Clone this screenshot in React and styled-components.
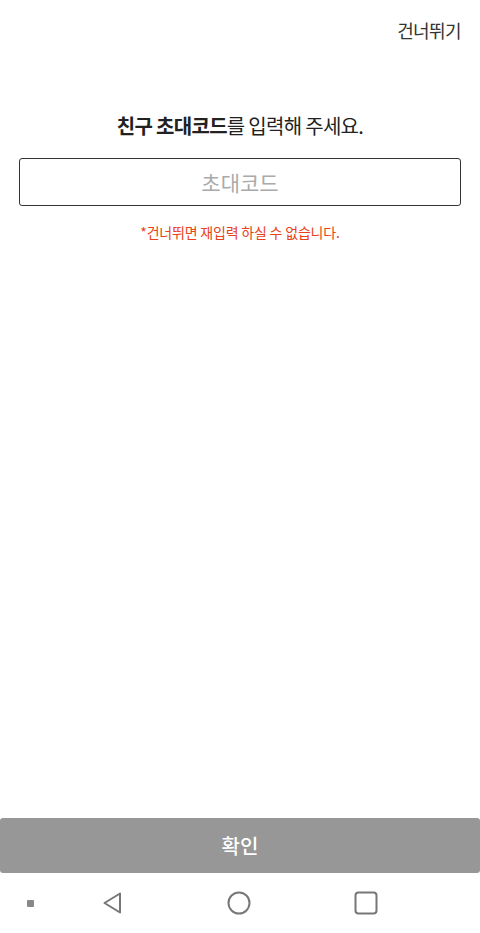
import styled, { createGlobalStyle } from "styled-components";

const GlobalStyle = createGlobalStyle`
  html, body {
    margin: 0;
    padding: 0;
    background: #fff;
  }
  body {
    font-family: "Noto Sans CJK KR", "Noto Sans", sans-serif;
  }
  * { box-sizing: border-box; }
`;

const App = () => {
  return (
    <Screen>
      <GlobalStyle />
      <Header>
        <SkipButton>건너뛰기</SkipButton>
      </Header>
      <Content>
        <Title>
          <strong>친구 초대코드</strong>를 입력해 주세요.
        </Title>
        <CodeInput placeholder="초대코드" />
        <Notice>*건너뛰면 재입력 하실 수 없습니다.</Notice>
      </Content>
      <ConfirmButton>확인</ConfirmButton>
      <NavBar>
        <NavSlot>
          <Dot />
        </NavSlot>
        <NavSlot>
          <svg width="24" height="26" viewBox="0 0 24 26">
            <path
              d="M20 3.5 L4.5 13 L20 22.5 Z"
              fill="none"
              stroke="#777"
              strokeWidth="2"
              strokeLinejoin="round"
            />
          </svg>
        </NavSlot>
        <NavSlot>
          <svg width="26" height="26" viewBox="0 0 26 26">
            <circle cx="13" cy="13" r="10.5" fill="none" stroke="#777" strokeWidth="2" />
          </svg>
        </NavSlot>
        <NavSlot>
          <svg width="26" height="26" viewBox="0 0 26 26">
            <rect x="2.5" y="2.5" width="21" height="21" rx="3" fill="none" stroke="#777" strokeWidth="2" />
          </svg>
        </NavSlot>
      </NavBar>
    </Screen>
  );
};

export default App;

const Screen = styled.div`
  display: flex;
  flex-direction: column;
  width: 480px;
  height: 933px;
  background: #fff;
  overflow: hidden;
`;

const Header = styled.div`
  display: flex;
  justify-content: flex-end;
  align-items: center;
  height: 60px;
  padding: 0 19px 0 0;
`;

const SkipButton = styled.span`
  font-size: 18px;
  color: #333;
  letter-spacing: -0.6px;
`;

const Content = styled.div`
  flex: 1;
  display: flex;
  flex-direction: column;
  align-items: center;
  padding: 50px 19px 0;
`;

const Title = styled.h1`
  margin: 0;
  font-size: 20px;
  font-weight: 400;
  color: #222;
  line-height: 32px;
  letter-spacing: -0.7px;

  strong {
    font-weight: 700;
  }
`;

const CodeInput = styled.input`
  margin-top: 16px;
  width: 100%;
  height: 48px;
  border: 1.5px solid #333;
  border-radius: 3px;
  font-family: inherit;
  font-size: 21px;
  text-align: center;
  color: #222;
  outline: none;

  &::placeholder {
    color: #aaa;
  }
`;

const Notice = styled.p`
  margin: 16px 0 0;
  font-size: 14px;
  color: #e8411c;
  letter-spacing: -0.2px;
`;

const ConfirmButton = styled.button`
  width: 480px;
  height: 55px;
  border: none;
  border-radius: 3px;
  background: #979797;
  color: #fff;
  font-family: inherit;
  font-size: 20px;
  font-weight: 500;
`;

const NavBar = styled.div`
  display: grid;
  grid-template-columns: 60px 104px 150px 104px 62px;
  height: 60px;
  align-items: center;
`;

const NavSlot = styled.div`
  display: flex;
  justify-content: center;
  align-items: center;
`;

const Dot = styled.div`
  width: 7px;
  height: 7px;
  background: #888;
  border-radius: 1px;
`;
